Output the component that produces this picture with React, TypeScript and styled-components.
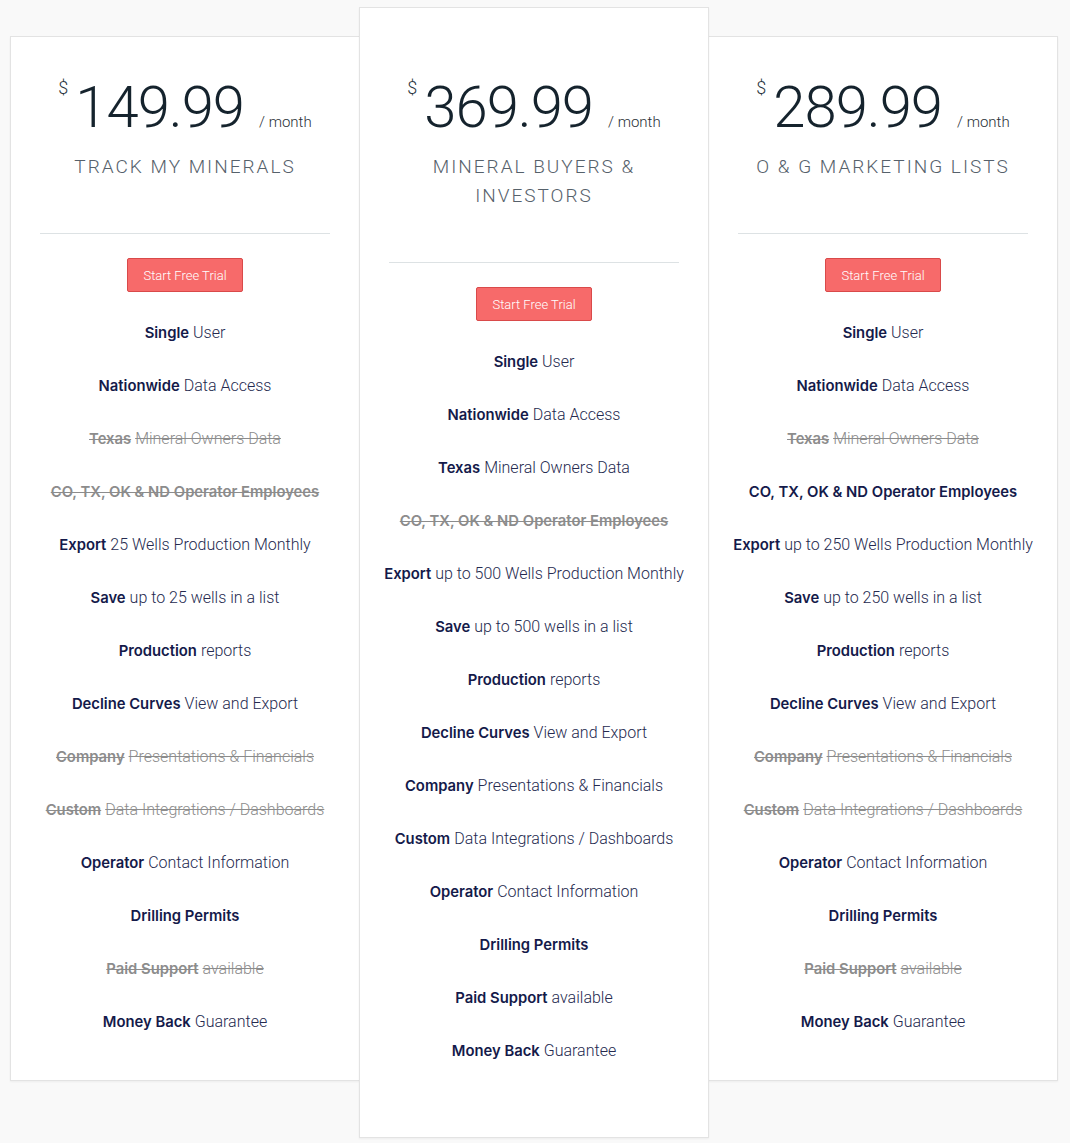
import styled, { createGlobalStyle } from 'styled-components';

const GlobalStyle = createGlobalStyle`
  html, body {
    margin: 0;
    padding: 0;
    background: #f9f9f9;
  }
  body {
    font-family: Roboto, "Liberation Sans", sans-serif;
  }
`;

type Feature = {
  bold?: string;
  text?: string;
  off?: boolean;
};

type Plan = {
  price: string;
  name: string;
  featured?: boolean;
  features: Feature[];
};

const plans: Plan[] = [
  {
    price: '149.99',
    name: 'TRACK MY MINERALS',
    features: [
      { bold: 'Single', text: 'User' },
      { bold: 'Nationwide', text: 'Data Access' },
      { bold: 'Texas', text: 'Mineral Owners Data', off: true },
      { bold: 'CO, TX, OK & ND Operator Employees', off: true },
      { bold: 'Export', text: '25 Wells Production Monthly' },
      { bold: 'Save', text: 'up to 25 wells in a list' },
      { bold: 'Production', text: 'reports' },
      { bold: 'Decline Curves', text: 'View and Export' },
      { bold: 'Company', text: 'Presentations & Financials', off: true },
      { bold: 'Custom', text: 'Data Integrations / Dashboards', off: true },
      { bold: 'Operator', text: 'Contact Information' },
      { bold: 'Drilling Permits' },
      { bold: 'Paid Support', text: 'available', off: true },
      { bold: 'Money Back', text: 'Guarantee' },
    ],
  },
  {
    price: '369.99',
    name: 'MINERAL BUYERS & INVESTORS',
    featured: true,
    features: [
      { bold: 'Single', text: 'User' },
      { bold: 'Nationwide', text: 'Data Access' },
      { bold: 'Texas', text: 'Mineral Owners Data' },
      { bold: 'CO, TX, OK & ND Operator Employees', off: true },
      { bold: 'Export', text: 'up to 500 Wells Production Monthly' },
      { bold: 'Save', text: 'up to 500 wells in a list' },
      { bold: 'Production', text: 'reports' },
      { bold: 'Decline Curves', text: 'View and Export' },
      { bold: 'Company', text: 'Presentations & Financials' },
      { bold: 'Custom', text: 'Data Integrations / Dashboards' },
      { bold: 'Operator', text: 'Contact Information' },
      { bold: 'Drilling Permits' },
      { bold: 'Paid Support', text: 'available' },
      { bold: 'Money Back', text: 'Guarantee' },
    ],
  },
  {
    price: '289.99',
    name: 'O & G MARKETING LISTS',
    features: [
      { bold: 'Single', text: 'User' },
      { bold: 'Nationwide', text: 'Data Access' },
      { bold: 'Texas', text: 'Mineral Owners Data', off: true },
      { bold: 'CO, TX, OK & ND Operator Employees' },
      { bold: 'Export', text: 'up to 250 Wells Production Monthly' },
      { bold: 'Save', text: 'up to 250 wells in a list' },
      { bold: 'Production', text: 'reports' },
      { bold: 'Decline Curves', text: 'View and Export' },
      { bold: 'Company', text: 'Presentations & Financials', off: true },
      { bold: 'Custom', text: 'Data Integrations / Dashboards', off: true },
      { bold: 'Operator', text: 'Contact Information' },
      { bold: 'Drilling Permits' },
      { bold: 'Paid Support', text: 'available', off: true },
      { bold: 'Money Back', text: 'Guarantee' },
    ],
  },
];

const Page = styled.div`
  min-height: 1143px;
  padding-left: 10px;
  display: flex;
  align-items: flex-start;
  background: #f9f9f9;
`;

const Card = styled.div<{ $featured?: boolean }>`
  position: relative;
  z-index: ${p => (p.$featured ? 2 : 1)};
  width: 350px;
  box-sizing: border-box;
  margin-top: ${p => (p.$featured ? '7px' : '36px')};
  margin-left: -1px;
  padding: ${p => (p.$featured ? '69px 28px 60px' : '40px 28px 32px')};
  background: #fff;
  border: 1px solid #e3e3e3;
  box-shadow: 0 1px 2px rgba(0, 0, 0, 0.05);
  display: flex;
  flex-direction: column;
  align-items: center;

  &:first-child {
    margin-left: 0;
  }
`;

const PriceRow = styled.div`
  display: flex;
  align-items: baseline;
  justify-content: center;
  height: 60px;
  color: #15232d;
`;

const Currency = styled.span`
  align-self: flex-start;
  font-size: 18px;
  font-weight: 300;
  line-height: 1;
  margin-top: 2px;
  margin-right: 7px;
  color: #2a3540;
`;

const Amount = styled.span`
  font-size: 58px;
  font-weight: 300;
  letter-spacing: -1px;
  line-height: 60px;
`;

const Period = styled.span`
  font-size: 15px;
  font-weight: 300;
  color: #2a3036;
  margin-left: 15px;
`;

const PlanName = styled.h2`
  margin: 15px 0 0;
  font-size: 19px;
  font-weight: 300;
  line-height: 29px;
  letter-spacing: 2px;
  color: #56616b;
  text-align: center;
`;

const Divider = styled.hr`
  align-self: stretch;
  margin: 52px 1px 0;
  border: 0;
  border-top: 1px solid #dde2e4;
`;

const TrialButton = styled.button`
  margin-top: 24px;
  width: 116px;
  height: 34px;
  padding: 0;
  background: #f76a6a;
  border: 1px solid #d94a4a;
  border-radius: 2px;
  color: #fff;
  font-family: Roboto, "Liberation Sans", sans-serif;
  font-size: 13px;
  font-weight: 300;
  cursor: pointer;
`;

const FeatureList = styled.ul`
  list-style: none;
  margin: 14px 0 0;
  padding: 0;
  align-self: stretch;
`;

const FeatureItem = styled.li<{ $off?: boolean }>`
  height: 53px;
  display: flex;
  align-items: center;
  justify-content: center;
  white-space: nowrap;
  font-size: 16px;
  font-weight: 300;
  color: ${p => (p.$off ? '#8c8c8c' : '#252a4f')};
  text-decoration: ${p => (p.$off ? 'line-through' : 'none')};

  b {
    font-family: Inter, Roboto, "Liberation Sans", sans-serif;
    font-weight: 600;
    font-size: 14.8px;
    color: ${p => (p.$off ? '#8c8c8c' : '#141a4a')};
    margin-right: 4px;
  }

  b:last-child {
    margin-right: 0;
  }
`;

function PlanCard({ plan }: { plan: Plan }) {
  return (
    <Card $featured={plan.featured}>
      <PriceRow>
        <Currency>$</Currency>
        <Amount>{plan.price}</Amount>
        <Period>/ month</Period>
      </PriceRow>
      <PlanName>{plan.name}</PlanName>
      <Divider />
      <TrialButton>Start Free Trial</TrialButton>
      <FeatureList>
        {plan.features.map((f, i) => (
          <FeatureItem key={i} $off={f.off}>
            {f.bold && <b>{f.bold}</b>}
            {f.text && <span>{f.text}</span>}
          </FeatureItem>
        ))}
      </FeatureList>
    </Card>
  );
}

export default function App() {
  return (
    <>
      <GlobalStyle />
      <Page>
        {plans.map(p => (
          <PlanCard key={p.price} plan={p} />
        ))}
      </Page>
    </>
  );
}
